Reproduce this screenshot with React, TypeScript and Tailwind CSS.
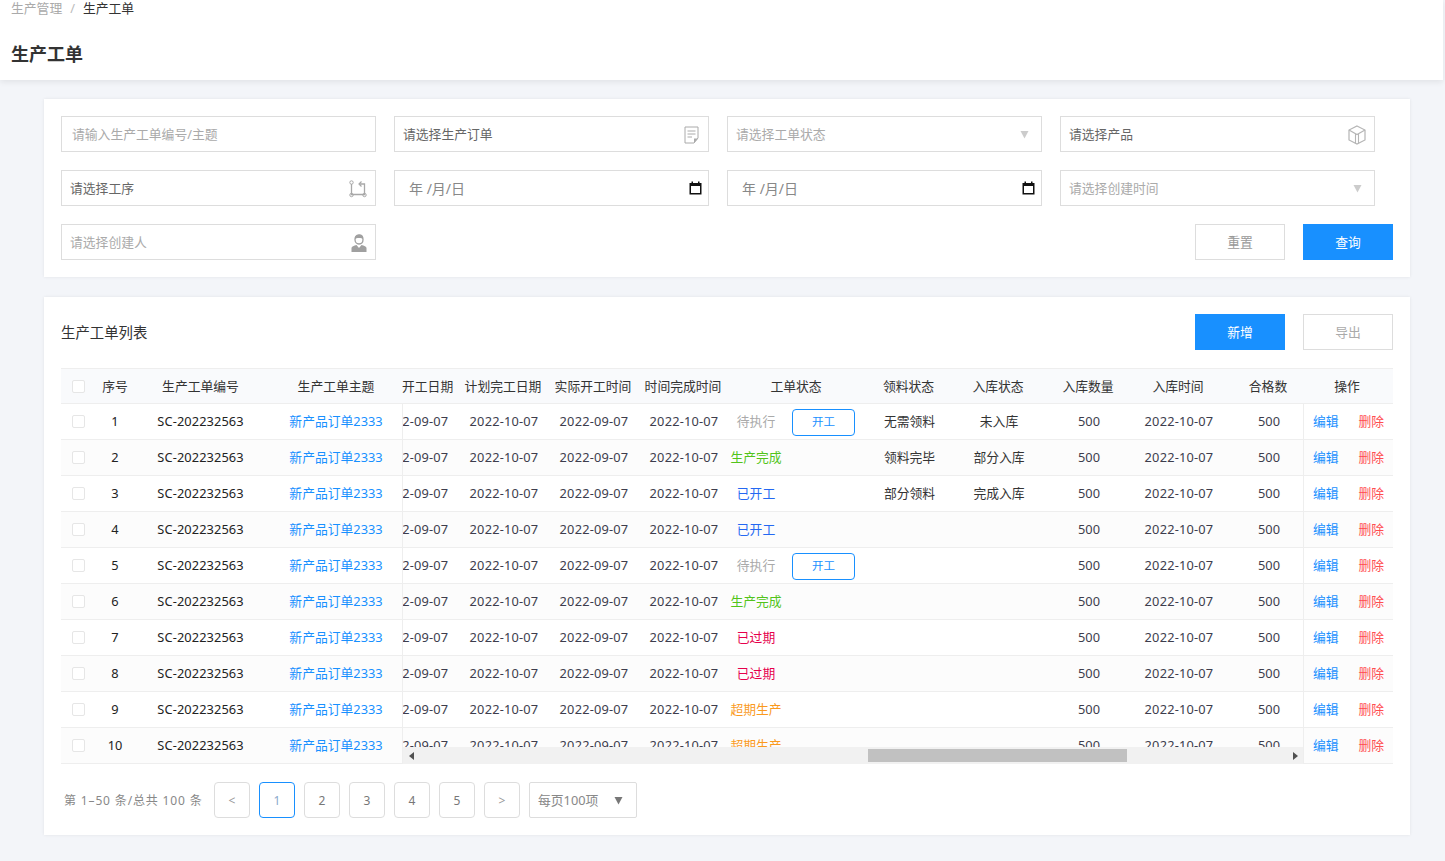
const F = '"Noto Sans","Noto Sans CJK SC",sans-serif';

function Tri({ c = "#cccccc" }: { c?: string }) {
  return (
    <svg width="9" height="9" viewBox="0 0 9 9" className="shrink-0">
      <path d="M0.5 1 H8.5 L4.5 8.5 Z" fill={c} />
    </svg>
  );
}
function DocIcon() {
  return (
    <svg width="15" height="18" viewBox="0 0 15 18" fill="none" className="shrink-0">
      <path d="M1 1 H14 V12 L10 17 H1 Z" stroke="#aaaaaa" strokeWidth="1" />
      <path d="M3.5 5 H11.5 M3.5 8 H11.5 M3.5 11 H8" stroke="#aaaaaa" strokeWidth="1" />
      <path d="M10 17 V12.5 H14 Z" fill="#aaaaaa" />
    </svg>
  );
}
function CubeIcon() {
  return (
    <svg width="18" height="20" viewBox="0 0 18 20" fill="none" className="shrink-0">
      <path d="M9 1 L17 5 V15 L9 19 L1 15 V5 Z" stroke="#b5b5b5" strokeWidth="1.2" />
      <path d="M1 5 L9 9.5 L17 5 M7.5 9 V18.5 M10.5 9 V18.5" stroke="#b5b5b5" strokeWidth="1.1" />
    </svg>
  );
}
function ProcessIcon() {
  return (
    <svg width="18" height="18" viewBox="0 0 18 18" fill="none" className="shrink-0">
      <path d="M2.5 4 V14.5 H15.5 V4 H11" stroke="#a8a8a8" strokeWidth="1.3" />
      <path d="M12.5 1.5 L10 4 L12.5 6.5" stroke="#a8a8a8" strokeWidth="1.2" />
      <circle cx="2.5" cy="2.5" r="1.7" stroke="#a8a8a8" />
      <circle cx="2.5" cy="15" r="1.7" stroke="#a8a8a8" />
      <circle cx="15.5" cy="15" r="1.7" stroke="#a8a8a8" />
    </svg>
  );
}
function PersonIcon() {
  return (
    <svg width="16" height="18" viewBox="0 0 16 18" className="shrink-0">
      <path d="M8 1 C11 1 12 3 12 5.5 C12 8 10.5 10 8 10 C5.5 10 4 8 4 5.5 C4 3 5 1 8 1 Z" fill="none" stroke="#a0a0a0" strokeWidth="1.3" />
      <path d="M4 5 C5 3.5 11 3.5 12 5 C12 2 10.5 0.8 8 0.8 C5.5 0.8 4 2 4 5 Z" fill="#a0a0a0" />
      <path d="M0.5 18 V14 C0.5 12.5 3 11.5 5.5 11 L8 14 L10.5 11 C13 11.5 15.5 12.5 15.5 14 V18 Z" fill="#a0a0a0" />
    </svg>
  );
}
function CalIcon() {
  return (
    <svg width="13" height="14" viewBox="0 0 13 14" className="shrink-0">
      <path d="M0.5 2 H12.5 V13.5 H0.5 Z M2 5 V12 H11 V5 Z" fill="#111111" fillRule="evenodd" />
      <path d="M2.5 0.5 H4 V3 H2.5 Z M9 0.5 H10.5 V3 H9 Z" fill="#111111" />
    </svg>
  );
}

function Field({ text, color = "text-[#aaaaaa]", pl = "pl-[8px]", pr = "pr-[9px]", size = "text-[12.8px] pt-[1px]", icon }: { text: string; color?: string; pl?: string; pr?: string; size?: string; icon?: React.ReactNode }) {
  return (
    <div className={`flex h-[36px] w-[315px] shrink-0 items-center justify-between border border-[#dddddd] ${pr} ${pl} ${size} ${color}`}>
      <span>{text}</span>
      {icon}
    </div>
  );
}

const statuses: [string, string, boolean][] = [
  ["待执行", "text-[#aaaaaa]", true],
  ["生产完成", "text-[#52c41a]", false],
  ["已开工", "text-[#2468f2]", false],
  ["已开工", "text-[#2468f2]", false],
  ["待执行", "text-[#aaaaaa]", true],
  ["生产完成", "text-[#52c41a]", false],
  ["已过期", "text-[#e6004c]", false],
  ["已过期", "text-[#e6004c]", false],
  ["超期生产", "text-[#fa9a1e]", false],
  ["超期生产", "text-[#fa9a1e]", false],
];
const ling = ["无需领料", "领料完毕", "部分领料"];
const ru = ["未入库", "部分入库", "完成入库"];

function Check() {
  return <span className="block h-[13px] w-[13px] rounded-[2px] border border-[#e6e6e6] bg-white" />;
}

function LeftCells({ a, b, c, link }: { a: React.ReactNode; b: string; c: string; link?: boolean }) {
  return (
    <>
      <div className="flex w-[34px] shrink-0 justify-center pl-[1px]"><Check /></div>
      <div className="w-[40px] shrink-0 pt-[1px] text-center">{a}</div>
      <div className={`w-[131px] shrink-0 pt-[1px] text-center ${link ? "tracking-[0.1px]" : ""}`}>{b}</div>
      <div className={`w-[136px] shrink-0 pl-[4px] pt-[1px] text-center ${link ? "text-[#1890ff]" : ""}`}>{c}</div>
    </>
  );
}

function HeadCell({ w, children }: { w: string; children: React.ReactNode }) {
  return <div className={`shrink-0 pt-[1px] text-center ${w}`}>{children}</div>;
}

export default function App() {
  return (
    <div className="h-[861px] w-full overflow-hidden bg-[#f3f5f9] text-[12.8px] text-[#333333]" style={{ fontFamily: F }}>
      <header className="h-[80px] w-[1443px] bg-white pl-[11px] shadow-[0_2px_6px_rgba(0,0,0,0.08)]">
        <div className="flex h-[16px] items-center text-[12.8px] leading-[16px]">
          <span className="text-[#aaaaaa]">生产管理</span>
          <span className="mx-[8px] text-[#bbbbbb]">/</span>
          <span className="text-[#333333]">生产工单</span>
        </div>
        <h1 className="mt-[26px] text-[18px] font-bold leading-[24px] text-[#333333]">生产工单</h1>
      </header>

      <section className="ml-[44px] mt-[19px] flex w-[1366px] flex-col gap-[18px] bg-white p-[17px] shadow-[0_0_3px_rgba(0,0,0,0.08)]">
        <div className="flex gap-[18px]">
          <Field text="请输入生产工单编号/主题" pl="pl-[10px]" />
          <Field text="请选择生产订单" color="text-[#666666]" icon={<DocIcon />} />
          <Field text="请选择工单状态" pr="pr-[12px]" icon={<Tri />} />
          <Field text="请选择产品" color="text-[#666666]" pr="pr-[8px]" icon={<CubeIcon />} />
        </div>
        <div className="flex gap-[18px]">
          <Field text="请选择工序" color="text-[#666666]" pr="pr-[8px]" icon={<ProcessIcon />} />
          <Field text="年 /月/日" color="text-[#888888]" pl="pl-[14px]" pr="pr-[6px]" size="text-[14px]" icon={<CalIcon />} />
          <Field text="年 /月/日" color="text-[#888888]" pl="pl-[14px]" pr="pr-[6px]" size="text-[14px]" icon={<CalIcon />} />
          <Field text="请选择创建时间" pr="pr-[12px]" icon={<Tri />} />
        </div>
        <div className="flex items-center justify-between">
          <Field text="请选择创建人" pr="pr-[8px]" icon={<PersonIcon />} />
          <div className="flex gap-[18px]">
            <button className="h-[36px] w-[90px] border border-[#dddddd] bg-white pt-[1px] text-[12.8px] text-[#999999]">重置</button>
            <button className="h-[36px] w-[90px] bg-[#1890ff] pt-[1px] text-[12.8px] text-white">查询</button>
          </div>
        </div>
      </section>

      <section className="ml-[44px] mt-[20px] w-[1366px] bg-white p-[17px] shadow-[0_0_3px_rgba(0,0,0,0.08)]">
        <div className="flex h-[36px] items-center justify-between">
          <span className="pt-[1px] text-[14.4px] text-[#333333]">生产工单列表</span>
          <div className="flex gap-[18px]">
            <button className="h-[36px] w-[90px] bg-[#1890ff] pt-[1px] text-[12.8px] text-white">新增</button>
            <button className="h-[36px] w-[90px] border border-[#dddddd] bg-white pt-[1px] text-[12.8px] text-[#aaaaaa]">导出</button>
          </div>
        </div>

        <div className="relative mt-[18px] w-[1332px]">
          <div className="flex h-[36px] items-center border-y border-[#eeeeee] bg-[#f9fafc]">
            <LeftCells a="序号" b="生产工单编号" c="生产工单主题" />
            <div className="w-[56px] shrink-0 pt-[1px]">开工日期</div>
            <HeadCell w="w-[90px]">计划完工日期</HeadCell>
            <HeadCell w="w-[90px]">实际开工时间</HeadCell>
            <HeadCell w="w-[90px]">时间完成时间</HeadCell>
            <HeadCell w="w-[136px]">工单状态</HeadCell>
            <HeadCell w="w-[89px]">领料状态</HeadCell>
            <HeadCell w="w-[90px]">入库状态</HeadCell>
            <HeadCell w="w-[90px]">入库数量</HeadCell>
            <HeadCell w="w-[90px]">入库时间</HeadCell>
            <HeadCell w="w-[90px]">合格数</HeadCell>
            <HeadCell w="-ml-[11px] w-[90px]">操作</HeadCell>
          </div>

          {statuses.map(([s, cls, btn], i) => (
            <div key={i} className={`flex h-[36px] items-center border-b border-[#eeeeee] ${i % 2 ? "bg-[#fcfcfc]" : "bg-white"}`}>
              <div className="flex h-full w-[342px] shrink-0 items-center border-r border-[#eeeeee] text-[#222222]">
                <LeftCells a={i + 1} b="SC-202232563" c="新产品订单2333" link />
              </div>
              <div className="h-full w-[900px] shrink-0 overflow-hidden">
                <div className="-ml-[34px] flex h-full w-[1000px] items-center pt-[1px] text-center text-[#3d3d4d]">
                  <div className="w-[90px] shrink-0 tracking-[0.2px]">2022-09-07</div>
                  <div className="w-[90px] shrink-0 tracking-[0.2px]">2022-10-07</div>
                  <div className="w-[90px] shrink-0 tracking-[0.2px]">2022-09-07</div>
                  <div className="w-[90px] shrink-0 tracking-[0.2px]">2022-10-07</div>
                  <div className="flex w-[136px] shrink-0 items-center">
                    <span className={`w-[54px] shrink-0 ${cls}`}>{s}</span>
                    {btn && (
                      <button className="ml-[9px] h-[27px] w-[63px] rounded-[4px] border border-[#1890ff] bg-white text-[11.5px] text-[#1890ff]">开工</button>
                    )}
                  </div>
                  <div className="w-[89px] shrink-0 text-[#333333]">{ling[i] ?? ""}</div>
                  <div className="w-[90px] shrink-0 text-[#333333]">{ru[i] ?? ""}</div>
                  <div className="w-[90px] shrink-0">500</div>
                  <div className="w-[90px] shrink-0 tracking-[0.2px]">2022-10-07</div>
                  <div className="w-[90px] shrink-0">500</div>
                </div>
              </div>
              <div className="flex h-full w-[90px] shrink-0 items-center justify-between border-l border-[#eeeeee] px-[9px] pt-[1px]">
                <span className="text-[#1890ff]">编辑</span>
                <span className="text-[#ff4d4f]">删除</span>
              </div>
            </div>
          ))}

          <div className="absolute bottom-0 left-[342px] flex h-[17px] w-[900px] items-center bg-[#f1f1f1]">
            <svg width="5" height="8" viewBox="0 0 5 8" className="ml-[6px] shrink-0"><path d="M5 0 V8 L0 4 Z" fill="#505050" /></svg>
            <div className="ml-[454px] h-[13px] w-[259px] shrink-0 bg-[#c1c1c1]" />
            <svg width="5" height="8" viewBox="0 0 5 8" className="ml-[166px] shrink-0"><path d="M0 0 V8 L5 4 Z" fill="#505050" /></svg>
          </div>
        </div>

        <div className="mt-[18px] flex h-[36px] items-center">
          <span className="ml-[3px] w-[150px] shrink-0 whitespace-nowrap pt-[1px] text-[12px] tracking-[0.85px] text-[#888888]">第 1–50 条/总共 100 条</span>
          <div className="flex gap-[9px] text-[12px] text-[#777777]">
            {["<", "1", "2", "3", "4", "5", ">"].map((p, i) => (
              <div
                key={i}
                className={`flex h-[36px] w-[36px] items-center justify-center rounded-[4px] border pt-[1px] ${i === 1 ? "border-[#1890ff] text-[#8aa9cc]" : "border-[#dddddd]"} ${i === 0 || i === 6 ? "text-[#999999]" : ""}`}
              >
                {p}
              </div>
            ))}
            <div className="flex h-[36px] w-[108px] items-center justify-between rounded-[2px] border border-[#dddddd] pl-[8px] pr-[13px] pt-[1px] text-[12.8px] text-[#888888]">
              <span>每页100项</span>
              <Tri c="#777777" />
            </div>
          </div>
        </div>
      </section>
    </div>
  );
}
